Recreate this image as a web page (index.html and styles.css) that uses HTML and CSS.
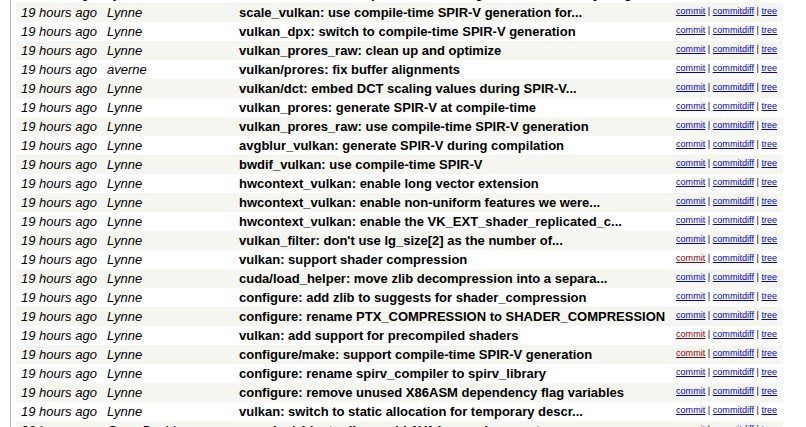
FILE: index.html
```html
<!DOCTYPE html>
<html>
<head>
<meta charset="utf-8">
<link rel="stylesheet" href="styles.css">
</head>
<body>
<div class="page">
<table class="shortlog">
<colgroup><col class="c-age"><col class="c-author"><col class="c-title"><col class="c-link"></colgroup>
<tr class="light"><td class="age">19 hours ago</td><td class="author">Lynne</td><td><a class="subject" href="#">vulkan_ffv1: use compile-time SPIR-V generation for everything</a></td><td class="link"><a href="#">commit</a> | <a href="#">commitdiff</a> | <a href="#">tree</a></td></tr>
<tr class="dark"><td class="age">19 hours ago</td><td class="author">Lynne</td><td><a class="subject" href="#">scale_vulkan: use compile-time SPIR-V generation for...</a></td><td class="link"><a href="#">commit</a> | <a href="#">commitdiff</a> | <a href="#">tree</a></td></tr>
<tr class="light"><td class="age">19 hours ago</td><td class="author">Lynne</td><td><a class="subject" href="#">vulkan_dpx: switch to compile-time SPIR-V generation</a></td><td class="link"><a href="#">commit</a> | <a href="#">commitdiff</a> | <a href="#">tree</a></td></tr>
<tr class="dark"><td class="age">19 hours ago</td><td class="author">Lynne</td><td><a class="subject" href="#">vulkan_prores_raw: clean up and optimize</a></td><td class="link"><a href="#">commit</a> | <a href="#">commitdiff</a> | <a href="#">tree</a></td></tr>
<tr class="light"><td class="age">19 hours ago</td><td class="author">averne</td><td><a class="subject" href="#">vulkan/prores: fix buffer alignments</a></td><td class="link"><a href="#">commit</a> | <a href="#">commitdiff</a> | <a href="#">tree</a></td></tr>
<tr class="dark"><td class="age">19 hours ago</td><td class="author">Lynne</td><td><a class="subject" href="#">vulkan/dct: embed DCT scaling values during SPIR-V...</a></td><td class="link"><a href="#">commit</a> | <a href="#">commitdiff</a> | <a href="#">tree</a></td></tr>
<tr class="light"><td class="age">19 hours ago</td><td class="author">Lynne</td><td><a class="subject" href="#">vulkan_prores: generate SPIR-V at compile-time</a></td><td class="link"><a href="#">commit</a> | <a href="#">commitdiff</a> | <a href="#">tree</a></td></tr>
<tr class="dark"><td class="age">19 hours ago</td><td class="author">Lynne</td><td><a class="subject" href="#">vulkan_prores_raw: use compile-time SPIR-V generation</a></td><td class="link"><a href="#">commit</a> | <a href="#">commitdiff</a> | <a href="#">tree</a></td></tr>
<tr class="light"><td class="age">19 hours ago</td><td class="author">Lynne</td><td><a class="subject" href="#">avgblur_vulkan: generate SPIR-V during compilation</a></td><td class="link"><a href="#">commit</a> | <a href="#">commitdiff</a> | <a href="#">tree</a></td></tr>
<tr class="dark"><td class="age">19 hours ago</td><td class="author">Lynne</td><td><a class="subject" href="#">bwdif_vulkan: use compile-time SPIR-V</a></td><td class="link"><a href="#">commit</a> | <a href="#">commitdiff</a> | <a href="#">tree</a></td></tr>
<tr class="light"><td class="age">19 hours ago</td><td class="author">Lynne</td><td><a class="subject" href="#">hwcontext_vulkan: enable long vector extension</a></td><td class="link"><a href="#">commit</a> | <a href="#">commitdiff</a> | <a href="#">tree</a></td></tr>
<tr class="dark"><td class="age">19 hours ago</td><td class="author">Lynne</td><td><a class="subject" href="#">hwcontext_vulkan: enable non-uniform features we were...</a></td><td class="link"><a href="#">commit</a> | <a href="#">commitdiff</a> | <a href="#">tree</a></td></tr>
<tr class="light"><td class="age">19 hours ago</td><td class="author">Lynne</td><td><a class="subject" href="#">hwcontext_vulkan: enable the VK_EXT_shader_replicated_c...</a></td><td class="link"><a href="#">commit</a> | <a href="#">commitdiff</a> | <a href="#">tree</a></td></tr>
<tr class="dark"><td class="age">19 hours ago</td><td class="author">Lynne</td><td><a class="subject" href="#">vulkan_filter: don't use lg_size[2] as the number of...</a></td><td class="link"><a href="#">commit</a> | <a href="#">commitdiff</a> | <a href="#">tree</a></td></tr>
<tr class="light"><td class="age">19 hours ago</td><td class="author">Lynne</td><td><a class="subject" href="#">vulkan: support shader compression</a></td><td class="link"><a class="visited" href="#">commit</a> | <a href="#">commitdiff</a> | <a href="#">tree</a></td></tr>
<tr class="dark"><td class="age">19 hours ago</td><td class="author">Lynne</td><td><a class="subject" href="#">cuda/load_helper: move zlib decompression into a separa...</a></td><td class="link"><a href="#">commit</a> | <a href="#">commitdiff</a> | <a href="#">tree</a></td></tr>
<tr class="light"><td class="age">19 hours ago</td><td class="author">Lynne</td><td><a class="subject" href="#">configure: add zlib to suggests for shader_compression</a></td><td class="link"><a href="#">commit</a> | <a href="#">commitdiff</a> | <a href="#">tree</a></td></tr>
<tr class="dark"><td class="age">19 hours ago</td><td class="author">Lynne</td><td><a class="subject" href="#">configure: rename PTX_COMPRESSION to SHADER_COMPRESSION</a></td><td class="link"><a href="#">commit</a> | <a href="#">commitdiff</a> | <a href="#">tree</a></td></tr>
<tr class="light"><td class="age">19 hours ago</td><td class="author">Lynne</td><td><a class="subject" href="#">vulkan: add support for precompiled shaders</a></td><td class="link"><a class="visited" href="#">commit</a> | <a href="#">commitdiff</a> | <a href="#">tree</a></td></tr>
<tr class="dark"><td class="age">19 hours ago</td><td class="author">Lynne</td><td><a class="subject" href="#">configure/make: support compile-time SPIR-V generation</a></td><td class="link"><a class="visited" href="#">commit</a> | <a href="#">commitdiff</a> | <a href="#">tree</a></td></tr>
<tr class="light"><td class="age">19 hours ago</td><td class="author">Lynne</td><td><a class="subject" href="#">configure: rename spirv_compiler to spirv_library</a></td><td class="link"><a href="#">commit</a> | <a href="#">commitdiff</a> | <a href="#">tree</a></td></tr>
<tr class="dark"><td class="age">19 hours ago</td><td class="author">Lynne</td><td><a class="subject" href="#">configure: remove unused X86ASM dependency flag variables</a></td><td class="link"><a href="#">commit</a> | <a href="#">commitdiff</a> | <a href="#">tree</a></td></tr>
<tr class="light"><td class="age">19 hours ago</td><td class="author">Lynne</td><td><a class="subject" href="#">vulkan: switch to static allocation for temporary descr...</a></td><td class="link"><a href="#">commit</a> | <a href="#">commitdiff</a> | <a href="#">tree</a></td></tr>
<tr class="dark"><td class="age">20 hours ago</td><td class="author">Gyan Doshi</td><td><a class="subject" href="#">avcodec/videotoolbox: add AV1 hwaccel support</a></td><td class="link"><a href="#">commit</a> | <a href="#">commitdiff</a> | <a href="#">tree</a></td></tr>
</table>
</div>
</body>
</html>
```

FILE: styles.css
```css
html, body {
  margin: 0;
  padding: 0;
  background: #ffffff;
  overflow: hidden;
}

body {
  font-family: "Liberation Sans", Arial, sans-serif;
  font-size: 13px;
  color: #000000;
}

.page {
  margin: -16px 0 0 10px;
  border-left: 1px solid #b5b5b5;
  padding-left: 5px;
  min-height: 460px;
}

.shortlog {
  border-spacing: 0;
  border-collapse: separate;
  table-layout: fixed;
  width: 767px;
}

.c-age { width: 86px; }
.c-author { width: 132px; }
.c-title { width: 437px; }
.c-link { width: 112px; }

.shortlog td {
  padding: 2px 5px;
  vertical-align: top;
  white-space: nowrap;
  overflow: hidden;
  line-height: 15px;
}

.dark { background: #f6f6f0; }
.light { background: #ffffff; }

.age, .author {
  font-style: italic;
}

.subject {
  color: #000000;
  text-decoration: none;
  font-weight: bold;
}

.shortlog td.link {
  font-size: 9.1px;
  line-height: 11px;
  color: #000000;
  padding-top: 3px;
}

.link a {
  color: #0000cc;
  text-decoration: underline;
}

.link a.visited {
  color: #880000;
}
```
